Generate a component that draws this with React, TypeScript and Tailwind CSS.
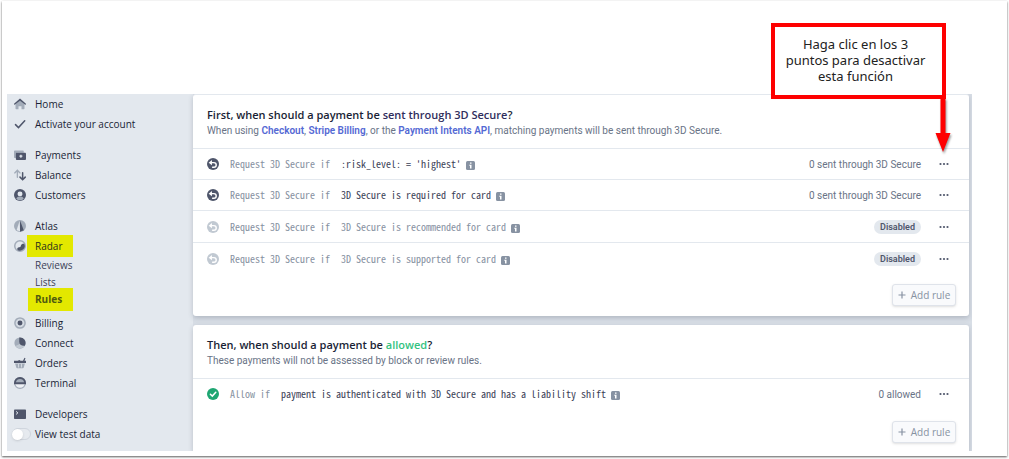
import React from "react";

const ui = "font-['Open_Sans','Noto_Sans',sans-serif]";
const body = "font-['Roboto','Open_Sans',sans-serif]";
const mono = "font-['Noto_Sans_Mono_CJK_SC','Noto_Sans_Mono','DejaVu_Sans_Mono',monospace]";

const DARK = "#4f566b";
const LIGHT = "#a3acb9";

function Icon({ children }: { children: React.ReactNode }) {
  return (
    <svg viewBox="0 0 16 16" className="size-3 shrink-0" aria-hidden="true">
      {children}
    </svg>
  );
}

const icons = {
  home: (
    <Icon>
      <path d="M2 8 8 3.200 14 8V14a1 1 0 0 1-1 1H10v-4H6v4H3a1 1 0 0 1-1-1z" fill={LIGHT} />
      <path d="M8 .8 15.600 7.400a.8.8 0 0 1-1 1.300L8 3.600 1.400 8.700a.8.8 0 0 1-1-1.300z" fill={DARK} />
    </Icon>
  ),
  check: (
    <Icon>
      <path d="m2 8.800 4 4L14.300 3.600" fill="none" stroke={DARK} strokeWidth="2" strokeLinecap="round" />
    </Icon>
  ),
  payments: (
    <Icon>
      <path d="M1 2h11a1 1 0 0 1 1 1v2H4v7H1a1 1 0 0 1-1-1V3a1 1 0 0 1 1-1z" fill={LIGHT} />
      <rect x="2.500" y="5" width="13.500" height="9.500" rx="1.200" fill={DARK} />
      <path d="M9.200 7.500v4M7.200 9.500h4" stroke="#e3e8ee" strokeWidth="1.700" />
    </Icon>
  ),
  balance: (
    <Icon>
      <path d="M4.500 11V2M1 5.200 4.500 1.700 8 5.200" fill="none" stroke={LIGHT} strokeWidth="1.800" strokeLinecap="round" />
      <path d="M11.500 5v9M8 10.800l3.500 3.500 3.500-3.500" fill="none" stroke={DARK} strokeWidth="2" strokeLinecap="round" />
    </Icon>
  ),
  customers: (
    <Icon>
      <circle cx="8" cy="8" r="8" fill={DARK} />
      <circle cx="8" cy="6.500" r="3.300" fill="#e3e8ee" />
      <path d="M3 13c1-2.600 3-3 5-3s4 .4 5 3c-1.500 1.500-3.200 2-5 2s-3.500-.5-5-2z" fill={LIGHT} />
    </Icon>
  ),
  atlas: (
    <Icon>
      <circle cx="8" cy="8" r="8" fill={LIGHT} />
      <path d="M7.500 1 3.500 13.500 8 15z" fill="#e3e8ee" />
      <path d="M8 .5 13 13.500 8 15.500z" fill={DARK} />
    </Icon>
  ),
  radar: (
    <Icon>
      <circle cx="8" cy="8" r="7" fill="#e3e8ee" stroke={LIGHT} strokeWidth="2" />
      <path d="M13.600 5A6.300 6.300 0 0 1 5 13.500C3.500 12 4.500 9.500 7 9.500c1.800 0 2-1.200 2.200-2.300.4-2 3-2.700 4.400-2.200z" fill={DARK} />
    </Icon>
  ),
  billing: (
    <Icon>
      <circle cx="8" cy="8" r="6.800" fill="#d5dbe3" stroke={LIGHT} strokeWidth="2" />
      <circle cx="8" cy="8" r="3.300" fill={DARK} />
    </Icon>
  ),
  connect: (
    <Icon>
      <circle cx="8" cy="8" r="7.500" fill={LIGHT} />
      <path d="M2 12A7.500 7.500 0 0 0 14.500 11.500L9 8.500z" fill="#c1c9d2" />
      <path d="M7 .6A7.500 7.500 0 0 1 14.500 11.500C10 12 6.500 10 7 5z" fill={DARK} />
    </Icon>
  ),
  orders: (
    <Icon>
      <path d="M1.500 8.500h13L13 14a1.500 1.500 0 0 1-1.400 1H4.400A1.500 1.500 0 0 1 3 14z" fill={LIGHT} />
      <path d="M6 9v5M10 9v5" stroke="#e3e8ee" strokeWidth="1" />
      <path d="M0 5h5l2-1 2 1h3l2-4 1.300.6L14 5h2v3H0z" fill={DARK} />
    </Icon>
  ),
  terminal: (
    <Icon>
      <circle cx="8" cy="8" r="7.200" fill="#eef1f5" stroke={LIGHT} strokeWidth="1.500" />
      <path d="M0 9.500V8a8 8 0 0 1 16 0v1.500z" fill={DARK} />
      <path d="M2.500 7a5.700 5.700 0 0 1 11 0z" fill={LIGHT} />
    </Icon>
  ),
  developers: (
    <Icon>
      <rect x="0" y="2" width="16" height="12.500" rx="1" fill={DARK} />
      <path d="m2.800 4.500 2.400 2-2.400 2" fill="none" stroke="#e3e8ee" strokeWidth="1.300" />
    </Icon>
  ),
};

function NavItem({ icon, children, marked }: { icon: keyof typeof icons; children: string; marked?: boolean }) {
  return (
    <a href="#" className="flex h-5 items-center pl-[7px]">
      {icons[icon]}
      {marked ? (
        <span className="-my-px ml-px flex h-[22px] w-[46px] items-center bg-[#e3e800] pl-2 font-medium text-[#2a2f1e]">{children}</span>
      ) : (
        <span className="ml-[9px]">{children}</span>
      )}
    </a>
  );
}

function Sidebar() {
  return (
    <nav className="flex w-[186px] shrink-0 flex-col gap-[11px] bg-[#e3e8ee] text-[10px] text-[#1a1f36]">
      <div>
        <NavItem icon="home">Home</NavItem>
        <NavItem icon="check">Activate your account</NavItem>
      </div>
      <div>
        <NavItem icon="payments">Payments</NavItem>
        <NavItem icon="balance">Balance</NavItem>
        <NavItem icon="customers">Customers</NavItem>
      </div>
      <div>
        <NavItem icon="atlas">Atlas</NavItem>
        <NavItem icon="radar" marked>Radar</NavItem>
        <div className="mt-px mb-[5px] text-[#3c4257]">
          <a href="#" className="flex h-[17px] items-center pl-7">Reviews</a>
          <a href="#" className="flex h-[17px] items-center pl-7">Lists</a>
          <a href="#" className="flex h-[17px] items-center pl-[21px] font-bold">
            <span className="flex h-[23px] w-[45px] shrink-0 items-center bg-[#e3e800] pl-[7px] text-[#4f5a10]">Rules</span>
          </a>
        </div>
        <NavItem icon="billing">Billing</NavItem>
        <NavItem icon="connect">Connect</NavItem>
        <NavItem icon="orders">Orders</NavItem>
        <NavItem icon="terminal">Terminal</NavItem>
      </div>
      <div>
        <NavItem icon="developers">Developers</NavItem>
        <label className="flex h-5 items-center pl-[5px]">
          <input type="checkbox" role="switch" className="peer sr-only" />
          <span className="flex h-3 w-[19px] items-center rounded-full border border-[#d0d6de] bg-[#e6eaef]">
            <span className="-ml-px size-[11px] rounded-full bg-white shadow-sm" />
          </span>
          <span className="ml-1">View test data</span>
        </label>
      </div>
    </nav>
  );
}

function RequestIcon({ muted }: { muted?: boolean }) {
  return (
    <svg viewBox="0 0 16 16" className="size-3 shrink-0" aria-hidden="true">
      <circle cx="8" cy="8" r="8" fill={muted ? "#c1c9d2" : DARK} />
      <path d="M5 6.200h4.200a3.100 3.100 0 0 1 0 6.200H7.500" fill="none" stroke="#fff" strokeWidth="1.900" strokeLinecap="round" />
      <path d="M6.600 2.800v6.800L2.200 6.200z" fill="#fff" />
    </svg>
  );
}

function AllowIcon() {
  return (
    <svg viewBox="0 0 16 16" className="size-3 shrink-0" aria-hidden="true">
      <circle cx="8" cy="8" r="8" fill="#1ea672" />
      <path d="m4.500 8.300 2.600 2.500 4.600-5" fill="none" stroke="#fff" strokeWidth="2" strokeLinecap="round" />
    </svg>
  );
}

function InfoIcon() {
  return (
    <svg viewBox="0 0 9 9" className="mt-[3px] ml-[5px] size-[9px] shrink-0" aria-hidden="true">
      <rect width="9" height="9" rx="1.500" fill="#8792a2" />
      <path d="M4 1.500h1.500v1.300H4zM3.300 3.700h2.200V7.500H4V4.800h-.7z" fill="#fff" />
    </svg>
  );
}

type Rule = { action: string; condition: string; count?: string; allow?: boolean };

function RuleRow({ rule }: { rule: Rule }) {
  const disabled = !rule.count;
  return (
    <li className={`${disabled ? "h-8" : "h-[31px]"} flex items-center border-t border-[#e3e8ee] pr-[19px] pl-[14px]`}>
      {rule.allow ? <AllowIcon /> : <RequestIcon muted={disabled} />}
      <div className={`${mono} ml-[11px] flex items-center text-[10px] leading-4`}>
        <span className="text-[#8792a2]">{rule.action}</span>
        <span className={disabled ? "ml-[11px] text-[#8792a2]" : "ml-[11px] text-[#3c4257]"}>{rule.condition}</span>
        <InfoIcon />
      </div>
      {rule.count ? (
        <span className={`${body} ml-auto text-[10px] text-[#697386]`}>{rule.count}</span>
      ) : (
        <span className={`${body} ml-auto rounded-full bg-[#e3e8ee] px-[6px] text-[9px] leading-[14px] font-semibold text-[#4f566b]`}>Disabled</span>
      )}
      <button type="button" aria-label="Options" className="ml-[17px] flex h-4 w-3 items-center justify-center">
        <svg viewBox="0 0 10 4" className="h-1 w-[10px]" aria-hidden="true">
          <circle cx="1.500" cy="2" r="1.100" fill="#4f566b" />
          <circle cx="5" cy="2" r="1.100" fill="#4f566b" />
          <circle cx="8.500" cy="2" r="1.100" fill="#4f566b" />
        </svg>
      </button>
    </li>
  );
}

function AddRule() {
  return (
    <button type="button" className="flex h-[22px] w-16 items-center justify-center gap-[5px] rounded-[3px] border border-[#dfe3ea] bg-[#f9fafc] text-[10px] font-medium text-[#8792a2] shadow-sm">
      <svg viewBox="0 0 8 8" className="size-2" aria-hidden="true">
        <path d="M4 .5v7M.5 4h7" stroke="#8792a2" strokeWidth="1.200" />
      </svg>
      Add rule
    </button>
  );
}

const secureRules: Rule[] = [
  { action: "Request 3D Secure if", condition: ":risk_level: = 'highest'", count: "0 sent through 3D Secure" },
  { action: "Request 3D Secure if", condition: "3D Secure is required for card", count: "0 sent through 3D Secure" },
  { action: "Request 3D Secure if", condition: "3D Secure is recommended for card" },
  { action: "Request 3D Secure if", condition: "3D Secure is supported for card" },
];

const allowRules: Rule[] = [
  { action: "Allow if", condition: "payment is authenticated with 3D Secure and has a liability shift", count: "0 allowed", allow: true },
];

function DocLink({ children }: { children: string }) {
  return <a href="#" className="font-semibold text-[#5469d4]">{children}</a>;
}

export default function App() {
  return (
    <div className={`${ui} bg-white px-[2px] pt-px pb-[3px]`}>
      <div className="relative bg-white pt-[93px] pr-[35px] pb-[5px] pl-[5px] shadow-[0_1px_2px_rgba(0,0,0,0.65)]">
        <div className="flex overflow-hidden bg-[#d8dee6]">
          <Sidebar />
          <main className="flex min-w-0 flex-1 flex-col gap-[9px] pr-[3px]">
            <section className="rounded-[3px] border-t border-[#e3e8ee] bg-white pb-[10px] shadow-[0_2px_5px_rgba(60,66,87,0.25)]">
              <header className="h-[53px] pt-3 pl-[14px]">
                <h2 className="text-[11px] leading-4 font-semibold text-[#1a1f36]">
                  First, when should a payment be <span className="text-[#2f2d5c]">sent through 3D Secure</span>?
                </h2>
                <p className={`${body} text-[10px] leading-4 text-[#697386]`}>
                  When using <DocLink>Checkout</DocLink>, <DocLink>Stripe Billing</DocLink>, or the <DocLink>Payment Intents API</DocLink>, matching payments will be sent through 3D Secure.
                </p>
              </header>
              <ul>
                {secureRules.map((rule) => (
                  <RuleRow key={rule.condition} rule={rule} />
                ))}
              </ul>
              <div className="mt-[10px] flex justify-end pr-[13px]">
                <AddRule />
              </div>
            </section>
            <section className="rounded-t-[3px] bg-white pb-2 shadow-[0_2px_5px_rgba(60,66,87,0.25)]">
              <header className="h-[53px] pt-3 pl-[14px]">
                <h2 className="text-[11px] leading-4 font-semibold text-[#1a1f36]">
                  Then, when should a payment be <span className="text-[#33c27f]">allowed</span>?
                </h2>
                <p className={`${body} text-[10px] leading-4 text-[#697386]`}>These payments will not be assessed by block or review rules.</p>
              </header>
              <ul>
                {allowRules.map((rule) => (
                  <RuleRow key={rule.condition} rule={rule} />
                ))}
              </ul>
              <div className="mt-3 flex justify-end pr-[13px]">
                <AddRule />
              </div>
            </section>
          </main>
        </div>

        <aside className="absolute top-[22px] right-[61px] h-[76px] w-[175px] border-4 border-[#fe0000] bg-white pt-[9px] pr-[6px] text-center font-['Noto_Sans','Open_Sans',sans-serif] text-[13px] leading-4 text-[#222]">
          Haga clic en los 3
          <br />
          puntos para desactivar
          <br />
          esta función
        </aside>
        <svg viewBox="0 0 18 56" className="absolute top-[97px] right-[55px] h-14 w-[18px] drop-shadow-[1px_2px_1px_rgba(0,0,0,0.4)]" aria-hidden="true">
          <path d="M6.500 0h5v35h5L9 54 1.500 35h5z" fill="#fe0000" />
        </svg>
      </div>
    </div>
  );
}
